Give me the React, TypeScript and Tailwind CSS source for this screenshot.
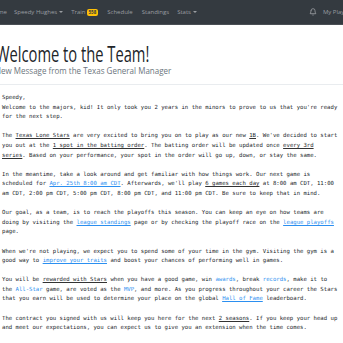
import React from "react";

type Seg = { t: string; k?: "u" | "l" | "b" };

const L = (...segs: (string | Seg)[]): Seg[] =>
  segs.map((s) => (typeof s === "string" ? { t: s } : s));
const u = (t: string): Seg => ({ t, k: "u" });
const l = (t: string): Seg => ({ t, k: "l" });
const b = (t: string): Seg => ({ t, k: "b" });

const lines: Seg[][] = [
  L("Speedy,"),
  L("Welcome to the majors, kid! It only took you 2 years in the minors to prove to us that you're ready"),
  L("for the next step."),
  [],
  L("The ", u("Texas Lone Stars"), " are very excited to bring you on to play as our new ", u("1B"), ". We've decided to start"),
  L("you out at the ", u("1 spot in the batting order"), ". The batting order will be updated once ", u("every 3rd")),
  L(u("series"), ". Based on your performance, your spot in the order will go up, down, or stay the same."),
  [],
  L("In the meantime, take a look around and get familiar with how things work. Our next game is"),
  L("scheduled for ", l("Apr. 25th 8:00 am CDT"), ". Afterwards, we'll play ", u("6 games each day"), " at 8:00 am CDT, 11:00"),
  L("am CDT, 2:00 pm CDT, 5:00 pm CDT, 8:00 pm CDT, and 11:00 pm CDT. Be sure to keep that in mind."),
  [],
  L("Our goal, as a team, is to reach the playoffs this season. You can keep an eye on how teams are"),
  L("doing by visiting the ", l("league standings"), " page or by checking the playoff race on the ", l("league playoffs")),
  L("page."),
  [],
  L("When we're not playing, we expect you to spend some of your time in the gym. Visiting the gym is a"),
  L("good way to ", l("improve your traits"), " and boost your chances of performing well in games."),
  [],
  L("You will be ", u("rewarded with Stars"), " when you have a good game, win ", b("awards"), ", break ", b("records"), ", make it to"),
  L("the ", b("All-Star"), " game, are voted as the ", b("MVP"), ", and more. As you progress throughout your career the Stars"),
  L("that you earn will be used to determine your place on the global ", l("Hall of Fame"), " leaderboard."),
  [],
  L("The contract you signed with us will keep you here for the next ", u("2 seasons"), ". If you keep your head up"),
  L("and meet our expectations, you can expect us to give you an extension when the time comes."),
];

function SegView({ s }: { s: Seg }) {
  if (s.k === "u") return <span className="underline decoration-[#333] underline-offset-[1px]">{s.t}</span>;
  if (s.k === "l") return <span className="text-[#2b8ff0] underline underline-offset-[1px]">{s.t}</span>;
  if (s.k === "b") return <span className="text-[#2b8ff0]">{s.t}</span>;
  return <>{s.t}</>;
}

function Bell() {
  return (
    <svg width="8" height="8" viewBox="0 0 24 24" fill="none" stroke="#9a9da1" strokeWidth="2.4" strokeLinecap="round" strokeLinejoin="round">
      <path d="M6 8a6 6 0 0 1 12 0c0 7 3 9 3 9H3s3-2 3-9" />
      <path d="M10.3 21a1.94 1.94 0 0 0 3.4 0" />
    </svg>
  );
}

function Caret() {
  return <span className="ml-[2px] inline-block h-0 w-0 border-x-[2px] border-t-[2.5px] border-x-transparent border-t-[#9a9da1] align-middle" />;
}

export default function App() {
  return (
    <div className="h-[343px] w-[343px] overflow-hidden bg-white font-['Open_Sans',sans-serif]">
      <nav className="flex h-[25px] items-center overflow-hidden whitespace-nowrap border-b border-[#4a4f55] bg-[#343a40] text-[6px] text-[#9a9da1] [&>*]:shrink-0">
        <div className="-ml-[10px] w-[15px]">Home</div>
        <div className="ml-[9px] flex items-center">Speedy Hughes<Caret /></div>
        <div className="ml-[8px] flex items-center">
          Train
          <span className="ml-[1px] rounded-[2px] bg-[#ffc107] px-[2px] text-[4.5px] font-bold leading-[7px] text-[#343a40]">558</span>
        </div>
        <div className="ml-[9px]">Schedule</div>
        <div className="ml-[9px]">Standings</div>
        <div className="ml-[8px] flex items-center">Stats<Caret /></div>
        <div className="ml-[112px] flex items-center">
          <Bell />
          <span className="ml-[6px]">My Player</span>
        </div>
      </nav>
      <div className="pt-[16px]">
        <h1 className="-ml-[4px] origin-left scale-x-[0.7] whitespace-nowrap text-[21px] font-normal leading-[26px] text-[#212529]">
          Welcome to the Team!
        </h1>
        <div className="-ml-[5px] origin-left scale-x-[0.89] whitespace-nowrap text-[9px] leading-[8px] text-[#6c757d]">
          New Message from the Texas General Manager
        </div>
        <div className="mt-[9px] border-t border-[#e9ecef]" />
        <div className="pl-[2px] pt-[8px] font-['DejaVu_Sans_Mono',monospace] text-[5.63px] leading-[9.6px] text-[#212529]">
          {lines.map((ln, i) => (
            <div key={i} className="h-[9.6px] whitespace-pre">
              {ln.map((s, j) => (
                <SegView key={j} s={s} />
              ))}
            </div>
          ))}
        </div>
      </div>
    </div>
  );
}
